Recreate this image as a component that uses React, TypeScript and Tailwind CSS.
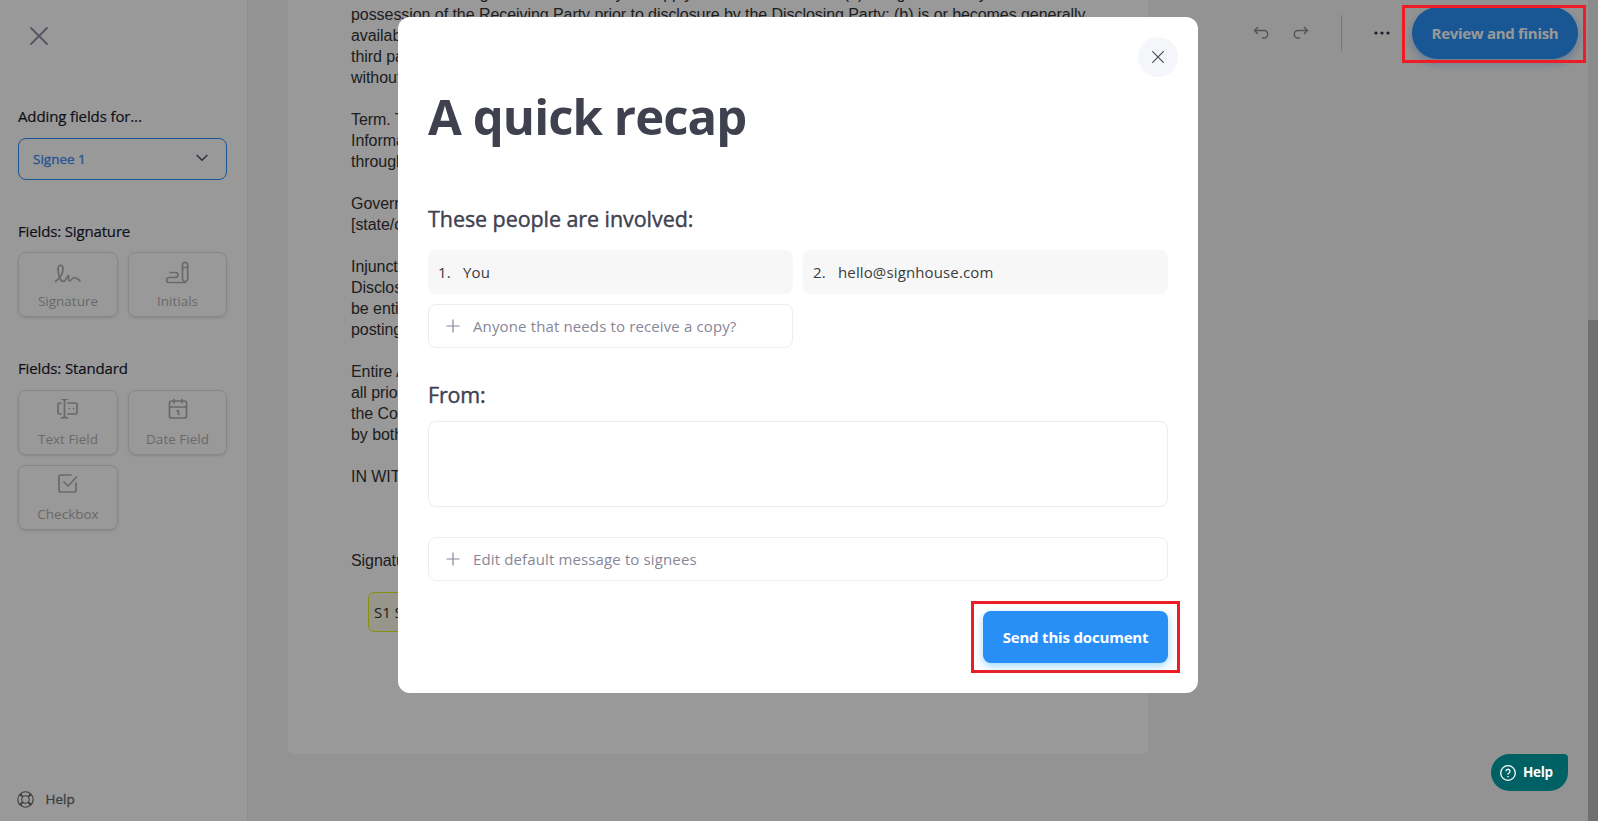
import type { ReactNode } from "react";

const documentLines = [
  "The limitation being set out herein may not apply to information that is (a) in legal hands by",
  "possession of the Receiving Party prior to disclosure by the Disclosing Party; (b) is or becomes generally",
  "available to the public",
  "third party",
  "without",
  "",
  "Term. This",
  "Information",
  "throughout",
  "",
  "Governing",
  "[state/country]",
  "",
  "Injunctive",
  "Disclosing",
  "be entitled",
  "posting",
  "",
  "Entire Agreement",
  "all prior",
  "the Confidential",
  "by both",
  "",
  "IN WITNESS",
];

interface FieldCardProps {
  label: string;
  children: ReactNode;
}

const FieldCard = ({ label, children }: FieldCardProps) => {
  return (
    <button className="flex h-[65px] flex-col items-center rounded-lg border border-[#e2e2e2] pt-2 text-[#b0b0b0] shadow-sm">
      <svg
        width="28"
        height="26"
        viewBox="0 0 28 26"
        fill="none"
        stroke="currentColor"
        strokeWidth="1.7"
        strokeLinecap="round"
        strokeLinejoin="round"
      >
        {children}
      </svg>
      <span className="mt-1 text-[13.5px] leading-5">{label}</span>
    </button>
  );
};

const CloseIcon = ({ size }: { size: number }) => (
  <svg width={size} height={size} viewBox="0 0 18 18" fill="none" stroke="currentColor" strokeWidth="1.8" strokeLinecap="round">
    <path d="M1 1l16 16M17 1L1 17" />
  </svg>
);

const PlusIcon = () => (
  <svg width="14" height="14" viewBox="0 0 14 14" fill="none" stroke="currentColor" strokeWidth="1.2">
    <path d="M7 .5v13M.5 7h13" />
  </svg>
);

const Sidebar = () => {
  return (
    <aside className="flex w-[248px] shrink-0 flex-col border-r border-[#ebebeb] bg-white pl-[18px] pr-5 text-[#1a1a2e]">
      <button className="ml-3 mt-[27px] w-[18px] text-[#8f8d9d]">
        <CloseIcon size={18} />
      </button>
      <h3 className="mt-[60px] text-[15px] leading-[22px] tracking-[-0.12px] [-webkit-text-stroke:0.2px]">Adding fields for...</h3>
      <button className="mt-[11px] flex h-[42px] items-center justify-between rounded-lg border border-[#288ff7] pl-[14px] pr-[18px] text-[13.5px] text-[#438ff5] [-webkit-text-stroke:0.35px]">
        <span>Signee 1</span>
        <svg width="12" height="8" viewBox="0 0 12 8" fill="none" stroke="#4b5563" strokeWidth="1.5" className="-mt-0.5">
          <path d="M.7 1L6 6.3 11.3 1" />
        </svg>
      </button>

      <h3 className="mt-10 text-[15px] leading-[22px] tracking-[-0.15px] [-webkit-text-stroke:0.2px]">Fields: Signature</h3>
      <div className="mt-[10px] grid grid-cols-[100px_99px] gap-[10px]">
        <FieldCard label="Signature">
          <path d="M1.500 20.500C5.500 17.500 9 12.500 9 8 9 3 4 3 4 8c0 5 2 12.500 5.500 12.500 2.500 0 3-5.500 5-6 .5 1-.5 5.500 1 5.500s2.500-3 4.500-3.500c1.500-.2 2 .8 3.500 1.500s2 1 2.500 2" />
        </FieldCard>
        <FieldCard label="Initials">
          <path d="M18.500 4a2.600 2.600 0 0 1 5.200 0v14.500L21.100 21.500 18.500 18.500zM18.500 6.500h5.200M6 11.500h5.500a2.500 2.500 0 0 1 0 5H5a2.500 2.500 0 0 0 0 5h16" />
        </FieldCard>
      </div>

      <h3 className="mt-10 text-[15px] leading-[22px] tracking-[-0.12px] [-webkit-text-stroke:0.2px]">Fields: Standard</h3>
      <div className="mt-[11px] grid grid-cols-[100px_99px] gap-[10px]">
        <FieldCard label="Text Field">
          <path d="M7 4H5.500A1.500 1.500 0 0 0 4 5.500v8A1.500 1.500 0 0 0 5.500 15H7M14 4h7.500A1.500 1.500 0 0 1 23 5.500v8a1.500 1.500 0 0 1-1.500 1.500H14M7.500 0c2 0 3 .5 3 2v15c0 1.500-1 2-3 2M13.500 0c-2 0-3 .5-3 2M13.500 19c-2 0-3-.5-3-2M15.500 9.500h.1M19.500 9.500h.1" />
        </FieldCard>
        <FieldCard label="Date Field">
          <rect x="5.500" y="2" width="17" height="17" rx="2" />
          <path d="M5.500 8h17M10 0v3.800M18 0v3.800M13 11.800h1.500v3.700" />
        </FieldCard>
        <FieldCard label="Checkbox">
          <path d="M17 1H7a2 2 0 0 0-2 2v13a2 2 0 0 0 2 2h13a2 2 0 0 0 2-2V9M10 8l4 4 8.500-9" />
        </FieldCard>
      </div>

      <div className="mt-auto mb-[11px] -ml-[1.5px] flex items-center gap-3 text-[13.5px] leading-[22px] text-[#666] [-webkit-text-stroke:0.3px]">
        <svg width="17" height="17" viewBox="0 0 17 17" fill="none" stroke="currentColor" strokeWidth="1.1">
          <circle cx="8.500" cy="8.500" r="7.700" />
          <circle cx="8.500" cy="8.500" r="3.700" />
          <path d="M2.800 3.800l3 2.200M3.800 2.800l2.200 3M14.200 3.800l-3 2.200M13.200 2.800l-2.200 3M2.800 13.200l3-2.200M3.800 14.200l2.200-3M14.200 13.200l-3-2.200M13.200 14.200l-2.200-3" />
        </svg>
        Help
      </div>
    </aside>
  );
};

const DocumentPage = () => {
  return (
    <div className="-mt-[17px] ml-10 h-[771px] w-[860px] rounded-md bg-white pl-[63px] font-['Liberation_Sans',Arial,sans-serif] text-[16px] tracking-[-0.06px] text-[#333]">
      {documentLines.map((line, index) => (
        <p key={index} className="h-[21px] leading-[21px] whitespace-nowrap">
          {line}
        </p>
      ))}
      <p className="mt-[63px] leading-[21px]">Signature</p>
      <div className="mt-[21px] ml-[17px] flex h-10 w-[160px] items-center rounded-md border border-[#e3f01e] bg-[#fbfae8] pl-[5px] font-['Open_Sans',sans-serif] text-[15px]">
        S1 Signature
      </div>
    </div>
  );
};

const Toolbar = () => {
  return (
    <header className="flex h-[66px] flex-1 items-center justify-end pr-[10px] text-[#8b8a99]">
      <svg width="16" height="14" viewBox="0 0 16 14" fill="none" stroke="currentColor" strokeWidth="1.4" className="mr-6">
        <path d="M5 1L1.500 4.500 5 8M1.500 4.500H11a3.500 3.500 0 0 1 0 7.500H9" />
      </svg>
      <svg width="16" height="14" viewBox="0 0 16 14" fill="none" stroke="currentColor" strokeWidth="1.4" className="mr-8">
        <path d="M11 1l3.500 3.500L11 8M14.500 4.500H5A3.500 3.500 0 0 0 5 12h2" />
      </svg>
      <div className="h-9 w-px bg-[#c9c9cd]" />
      <svg width="16" height="4" viewBox="0 0 16 4" fill="#2a3342" className="mr-[22px] ml-8">
        <circle cx="2" cy="2" r="1.600" />
        <circle cx="8" cy="2" r="1.600" />
        <circle cx="14" cy="2" r="1.600" />
      </svg>
      <button className="h-[52px] w-[166px] rounded-full bg-[#288ff7] text-[15px] font-bold tracking-[-0.3px] text-white shadow-[0_4px_10px_rgba(40,143,247,0.4)]">
        Review and finish
      </button>
    </header>
  );
};

const RecapModal = () => {
  return (
    <section className="relative flex h-[676px] w-[800px] flex-col rounded-xl bg-white px-[30px] text-[#40414f]">
      <button className="absolute top-5 right-5 flex size-10 items-center justify-center rounded-full bg-[#f5f6f9] text-[#4d4a5e]">
        <CloseIcon size={12} />
      </button>
      <h1 className="mt-[65px] text-[49px] leading-[68px] font-bold tracking-[-0.9px]">A quick recap</h1>
      <h2 className="mt-[53px] text-[21.5px] leading-8 tracking-[-0.07px] [-webkit-text-stroke:0.4px]">These people are involved:</h2>
      <ul className="mt-[15px] grid grid-cols-2 gap-[10px] text-[15px] tracking-[0.13px] text-[#3b3b3b]">
        <li className="flex h-11 items-center rounded-lg bg-[#f7f7f7] pl-[10px]">
          <span className="w-[25px]">1.</span>You
        </li>
        <li className="flex h-11 items-center rounded-lg bg-[#f7f7f7] pl-[10px]">
          <span className="w-[25px]">2.</span>hello@signhouse.com
        </li>
        <li className="flex h-11 items-center gap-[13px] rounded-lg border border-[#ededf0] pl-[17px] text-[#878699]">
          <PlusIcon />
          Anyone that needs to receive a copy?
        </li>
      </ul>
      <h2 className="mt-[31px] text-[21.5px] leading-8 tracking-[-0.2px] [-webkit-text-stroke:0.4px]">From:</h2>
      <textarea className="mt-[10px] h-[86px] shrink-0 resize-none rounded-lg border border-[#ededf0]" />
      <button className="mt-[30px] flex h-11 shrink-0 items-center gap-[13px] rounded-lg border border-[#ededf0] pl-[17px] text-[15px] tracking-[0.13px] text-[#878699]">
        <PlusIcon />
        Edit default message to signees
      </button>
      <div className="mt-5 -mr-3 self-end border-3 border-[#ee1c25] px-[9px] pt-[7px] pb-[7px]">
        <button className="h-[52px] w-[185px] rounded-lg bg-[#288ff7] text-[15px] font-bold tracking-[-0.18px] text-white shadow-[0_3px_9px_rgba(40,170,247,0.45)]">
          Send this document
        </button>
      </div>
    </section>
  );
};

export default function App() {
  return (
    <div className="relative flex h-[821px] w-[1598px] overflow-hidden bg-[#f5f5f5] font-['Open_Sans','Noto_Sans',sans-serif]">
      <Sidebar />
      <main className="flex flex-1 items-start">
        <DocumentPage />
        <Toolbar />
      </main>
      <div className="w-[10px] bg-[#e8e8e8] pt-[320px]">
        <div className="h-full bg-[#bababa]" />
      </div>

      <div className="absolute inset-0 flex items-start justify-center bg-black/40 pt-[17px] pr-0.5">
        <RecapModal />
      </div>
      <div className="absolute top-[5px] right-3 h-[58px] w-[184px] border-3 border-[#ee1c25]" />
      <button className="absolute right-[30px] bottom-[30px] flex h-[37px] w-[77px] items-center gap-[7px] rounded-[19px] rounded-tr-[4px] bg-[#006165] pl-[9px] text-[13.5px] font-bold tracking-[-0.3px] text-white">
        <svg width="16" height="16" viewBox="0 0 16 16" fill="none" stroke="currentColor" strokeWidth="1.300">
          <circle cx="8" cy="8" r="7.300" />
          <path d="M6 6.300a2 2 0 1 1 3 1.700c-.7.400-1 .7-1 1.400M8 11v1.300" />
        </svg>
        Help
      </button>
    </div>
  );
}
